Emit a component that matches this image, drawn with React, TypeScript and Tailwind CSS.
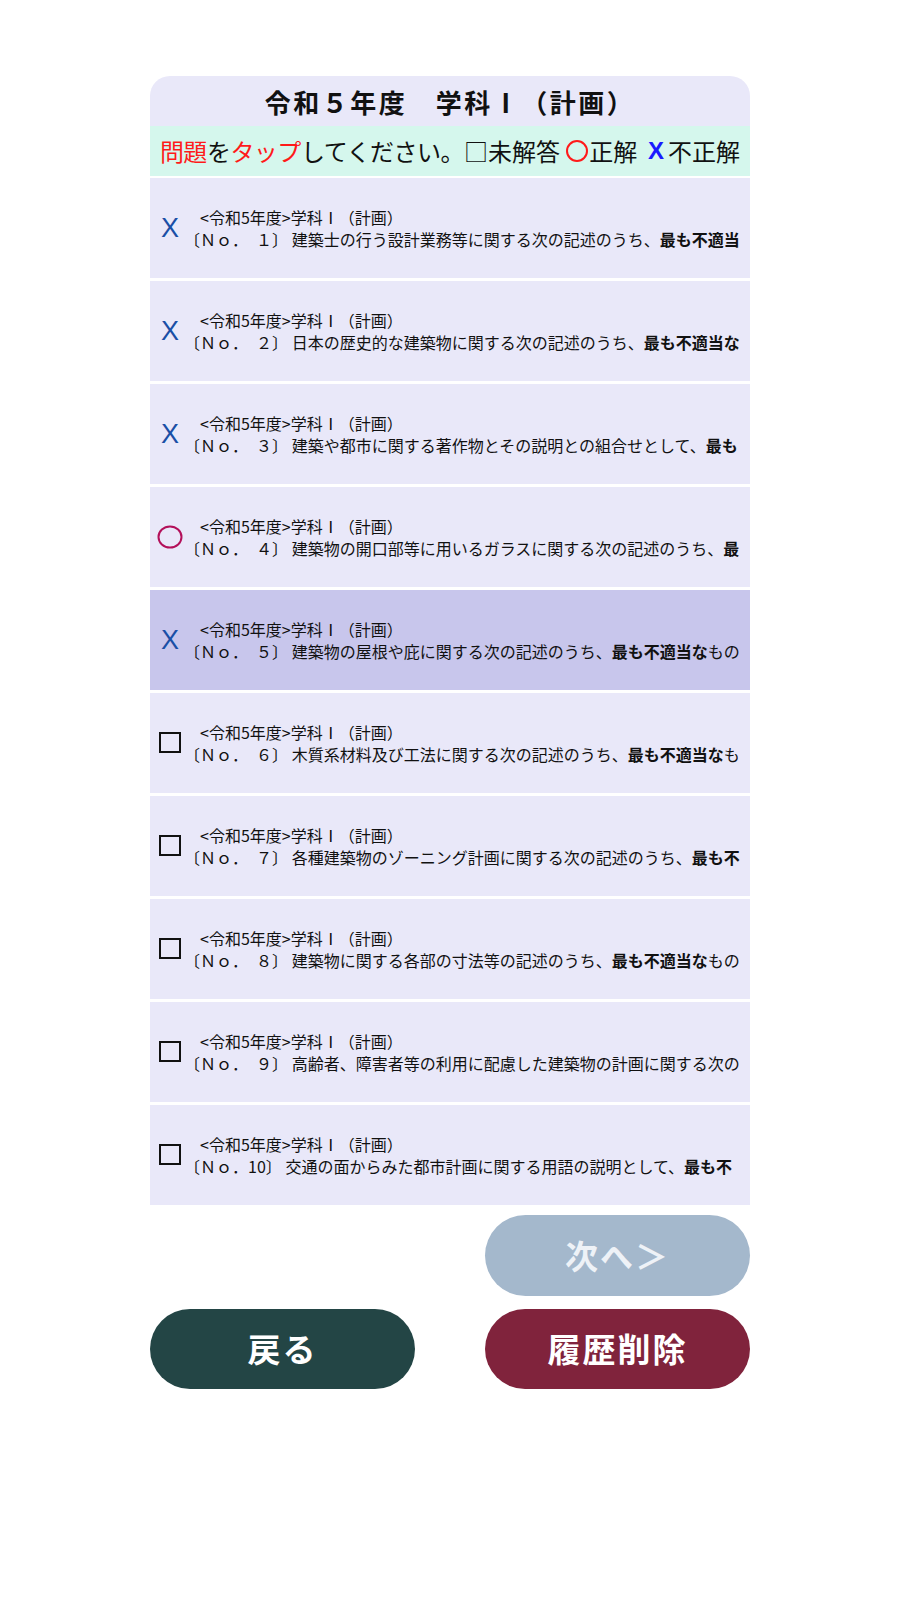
import React from "react";

type Status = "wrong" | "right" | "none";

const questions: { no: string; text: string; tail: string; status: Status }[] = [
  { no: "　１", text: "建築士の行う設計業務等に関する次の記述のうち、", tail: "ものはどれか。", status: "wrong" },
  { no: "　２", text: "日本の歴史的な建築物に関する次の記述のうち、", tail: "ものはどれか。", status: "wrong" },
  { no: "　３", text: "建築や都市に関する著作物とその説明との組合せとして、", tail: "ものは、次のうちどれか。", status: "wrong" },
  { no: "　４", text: "建築物の開口部等に用いるガラスに関する次の記述のうち、", tail: "ものはどれか。", status: "right" },
  { no: "　５", text: "建築物の屋根や庇に関する次の記述のうち、", tail: "ものはどれか。", status: "wrong" },
  { no: "　６", text: "木質系材料及び工法に関する次の記述のうち、", tail: "ものはどれか。", status: "none" },
  { no: "　７", text: "各種建築物のゾーニング計画に関する次の記述のうち、", tail: "ものはどれか。", status: "none" },
  { no: "　８", text: "建築物に関する各部の寸法等の記述のうち、", tail: "ものはどれか。", status: "none" },
  { no: "　９", text: "高齢者、障害者等の利用に配慮した建築物の計画に関する次の記述のうち、", tail: "ものはどれか。", status: "none" },
  { no: "10", text: "交通の面からみた都市計画に関する用語の説明として、", tail: "ものはどれか。", status: "none" },
];

const font = { fontFamily: '"Noto Sans CJK JP", "Noto Sans", sans-serif' };
const latin = { fontFamily: '"Liberation Sans", Arial, sans-serif' };

function StatusIcon({ status }: { status: Status }) {
  if (status === "wrong") {
    return (
      <span className="text-[27px] leading-none text-[#1a4fa6]" style={latin}>
        X
      </span>
    );
  }
  if (status === "right") {
    return (
      <svg width="26" height="24" viewBox="0 0 26 24">
        <ellipse cx="13" cy="12" rx="11.5" ry="10.5" fill="none" stroke="#b3105a" strokeWidth="2" />
      </svg>
    );
  }
  return (
    <svg width="24" height="22" viewBox="0 0 24 22">
      <rect x="2" y="1" width="20" height="19" fill="none" stroke="#111" strokeWidth="2" />
    </svg>
  );
}

export default function App() {
  return (
    <div className="min-h-[1600px] bg-white text-[#111]" style={font}>
      <div className="mx-auto w-[600px] pt-[76px]">
        {/* Title */}
        <div className="flex h-[50px] items-center justify-center rounded-t-[20px] bg-[#e9e8f9]">
          <h1 className="text-[26px] font-bold tracking-[2.5px]">令和５年度　学科Ⅰ（計画）</h1>
        </div>

        {/* Legend */}
        <div className="flex h-[50px] items-center justify-center bg-[#d5f7ed] text-[24px] whitespace-pre">
          <span className="tracking-[-0.5px]">
            <span className="text-[#ff1a1a]">問題</span>を<span className="text-[#ff1a1a]">タップ</span>してください。
          </span>
          □未解答{" "}
          <svg width="24" height="24" viewBox="0 0 24 24">
            <circle cx="12" cy="12" r="10" fill="none" stroke="#ff1a1a" strokeWidth="2" />
          </svg>
          正解{"  "}
          <span className="mr-[4px] font-bold text-[#1a1aff]" style={latin}>
            X
          </span>
          不正解
        </div>

        {/* Question list */}
        <div className="mt-[2px] flex flex-col gap-[3px]">
          {questions.map((q, i) => (
            <div
              key={i}
              className={`flex h-[100px] items-center pl-[6px] pr-[6px] ${i === 4 ? "bg-[#c8c6ec]" : "bg-[#e9e8f9]"}`}
            >
              <div className="flex w-[28px] shrink-0 justify-center">
                <StatusIcon status={q.status} />
              </div>
              <div className="min-w-0 flex-1">
                <p className="h-[22px] text-[16px] leading-[22px] whitespace-nowrap">　&lt;令和5年度&gt;学科Ⅰ（計画）</p>
                <p className="h-[22px] overflow-hidden text-[16px] leading-[22px] break-all">
                  〔Ｎｏ．{q.no}〕 {q.text}
                  <span className="font-bold">最も不適当な</span>
                  {q.tail}
                </p>
              </div>
            </div>
          ))}
        </div>

        {/* Buttons */}
        <div className="mt-[10px] flex justify-end">
          <button className="h-[81px] w-[265px] rounded-full bg-[#a4b8cc] text-[33px] font-bold tracking-[2px] text-[#eef2f7]">
            次へ＞
          </button>
        </div>
        <div className="mt-[13px] flex justify-between">
          <button className="h-[80px] w-[265px] rounded-full bg-[#234545] text-[33px] font-bold tracking-[2px] text-white">
            戻る
          </button>
          <button className="h-[80px] w-[265px] rounded-full bg-[#80233c] text-[33px] font-bold tracking-[2px] text-white">
            履歴削除
          </button>
        </div>
      </div>
    </div>
  );
}
